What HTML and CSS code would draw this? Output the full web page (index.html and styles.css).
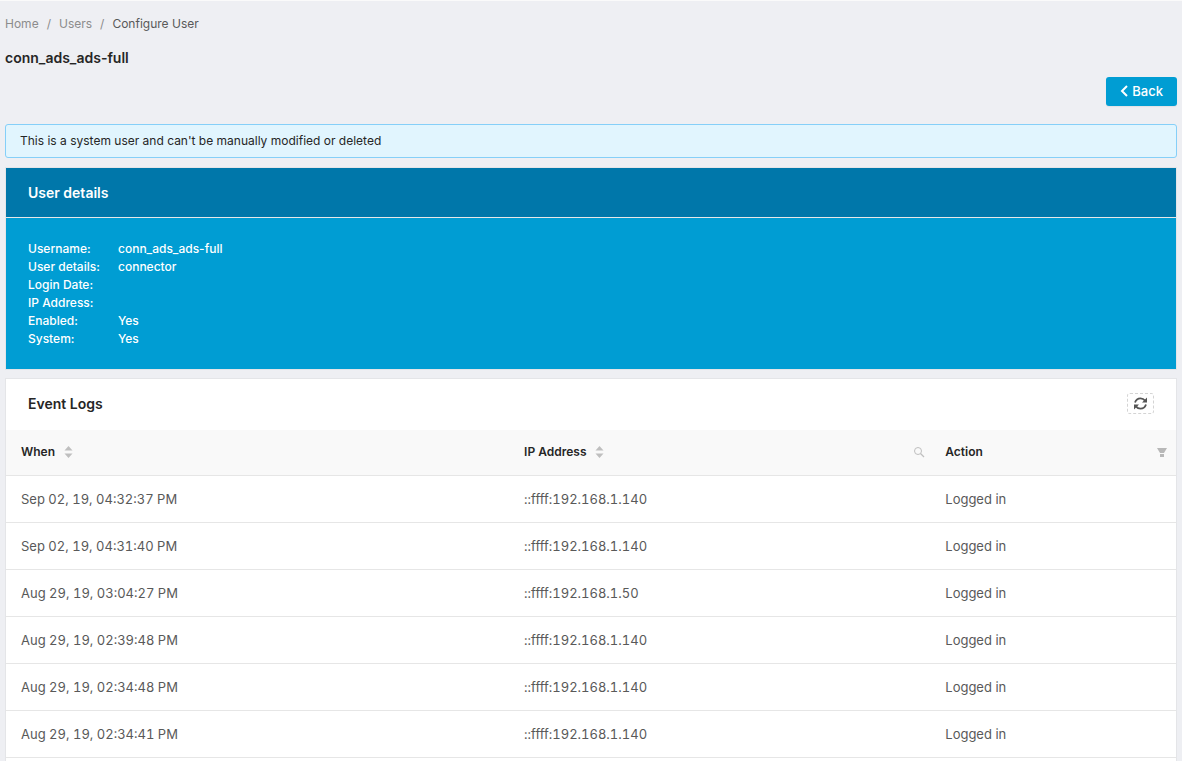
FILE: index.html
```html
<!DOCTYPE html>
<html lang="en">
<head>
<meta charset="utf-8">
<title>Configure User</title>
<link rel="stylesheet" href="styles.css">
</head>
<body>
<main class="page">
  <nav class="breadcrumb" aria-label="Breadcrumb">
    <a href="#">Home</a><span class="sep">/</span><a href="#">Users</a><span class="sep">/</span><span class="current">Configure User</span>
  </nav>
  <h1 class="title">conn_ads_ads-full</h1>
  <div class="actions">
    <button class="back" type="button"><svg width="8" height="12" viewBox="0 0 8 12" aria-hidden="true"><path d="M7 1 2 6l5 5" fill="none" stroke="#fff" stroke-width="2"/></svg>Back</button>
  </div>
  <div class="alert">This is a system user and can't be manually modified or deleted</div>
  <section class="card details">
    <h2 class="card-head">User details</h2>
    <dl class="info">
      <dt>Username:</dt><dd>conn_ads_ads-full</dd>
      <dt>User details:</dt><dd>connector</dd>
      <dt>Login Date:</dt><dd></dd>
      <dt>IP Address:</dt><dd></dd>
      <dt>Enabled:</dt><dd>Yes</dd>
      <dt>System:</dt><dd>Yes</dd>
    </dl>
  </section>
  <section class="card logs">
    <div class="logs-head">
      <h2>Event Logs</h2>
      <button class="refresh" type="button" aria-label="Refresh"><svg width="13" height="13" viewBox="0 0 13 13" aria-hidden="true"><g fill="none" stroke="#555" stroke-width="1.800"><path d="M1 5.500C1.800 3 3.900 1.300 6.500 1.300c1.900 0 3.400.8 4.600 2.300M12 7.500c-.8 2.500-2.900 4.200-5.500 4.200-1.900 0-3.400-.8-4.600-2.300"/></g><path fill="#555" d="M13 .5v5H8zM0 12.500v-5h5z"/></svg></button>
    </div>
    <table class="table">
      <colgroup><col class="c-when"><col class="c-ip"><col class="c-action"></colgroup>
      <thead>
        <tr>
          <th scope="col"><div class="th">When<svg class="sort" width="9" height="12" viewBox="0 0 9 12" aria-hidden="true"><path d="M4.500 0 8.500 4.500h-8zM4.500 12 .5 7.500h8z"/></svg></div></th>
          <th scope="col"><div class="th">IP Address<svg class="sort" width="9" height="12" viewBox="0 0 9 12" aria-hidden="true"><path d="M4.500 0 8.500 4.500h-8zM4.500 12 .5 7.500h8z"/></svg><svg class="tool" width="12" height="12" viewBox="0 0 12 12" aria-hidden="true"><circle cx="5" cy="5" r="3.500" fill="none" stroke="#bfbfbf"/><path d="m7.500 7.500 3.500 3.500" stroke="#bfbfbf" stroke-width="1.300"/></svg></div></th>
          <th scope="col"><div class="th">Action<svg class="tool filter" width="12" height="10" viewBox="0 0 12 10" aria-hidden="true"><path fill="#b8b8b8" d="M1 1h10L8 6H4zM4 7h4v3H4z"/></svg></div></th>
        </tr>
      </thead>
      <tbody>
        <tr><td>Sep 02, 19, 04:32:37 PM</td><td>::ffff:192.168.1.140</td><td>Logged in</td></tr>
        <tr><td>Sep 02, 19, 04:31:40 PM</td><td>::ffff:192.168.1.140</td><td>Logged in</td></tr>
        <tr><td>Aug 29, 19, 03:04:27 PM</td><td>::ffff:192.168.1.50</td><td>Logged in</td></tr>
        <tr><td>Aug 29, 19, 02:39:48 PM</td><td>::ffff:192.168.1.140</td><td>Logged in</td></tr>
        <tr><td>Aug 29, 19, 02:34:48 PM</td><td>::ffff:192.168.1.140</td><td>Logged in</td></tr>
        <tr><td>Aug 29, 19, 02:34:41 PM</td><td>::ffff:192.168.1.140</td><td>Logged in</td></tr>
      </tbody>
    </table>
  </section>
</main>
</body>
</html>
```
FILE: styles.css
```css
* { box-sizing: border-box; }
body {
  margin: 0;
  background: #eeeff3;
  color: #262626;
  font: 12px/18px Inter, "Liberation Sans", sans-serif;
}
h1, h2, dl, dd { margin: 0; }
button { font: inherit; cursor: pointer; }
.page {
  display: flex;
  flex-direction: column;
  min-height: 100vh;
  padding: 14px 5px 0;
  border-top: 1px solid #fafafa;
}
.breadcrumb { color: #8c8c8c; }
.breadcrumb a { color: inherit; text-decoration: none; }
.sep { margin: 0 8px; }
.current { color: #595959; }
.title {
  margin-top: 14px;
  font-size: 14px;
  line-height: 22px;
  font-weight: 600;
}
.actions { display: flex; justify-content: flex-end; margin-top: 8px; }
.back {
  display: flex;
  align-items: center;
  gap: 4px;
  padding: 5px 14px 6px;
  border: 0;
  border-radius: 3px;
  background: #009dd3;
  color: #fff;
  font-size: 13px;
  font-weight: 500;
  box-shadow: 0 1px 1px #e0e1e5;
}
.alert {
  margin-top: 18px;
  padding: 7px 14px;
  border: 1px solid #85cff8;
  border-radius: 3px;
  background: #e1f5fe;
}
.card { border: 1px solid #e4e5e8; }
.details {
  margin-top: 9px;
  background: #009dd3;
  color: #fff;
}
.card-head {
  padding: 14px 22px 13px;
  border-bottom: 1px solid #e8e8e8;
  background: #0077aa;
  font-size: 14px;
  line-height: 22px;
  font-weight: 600;
}
.info {
  display: grid;
  grid-template-columns: 90px 1fr;
  grid-auto-rows: 18px;
  padding: 22px 22px 21px;
  font-weight: 500;
}
.logs { flex: 1; margin-top: 8px; border-bottom: 0; background: #fff; }
.logs-head {
  display: flex;
  align-items: flex-start;
  justify-content: space-between;
  padding: 14px 22px 15px;
}
.logs-head h2 { font-size: 14px; line-height: 22px; font-weight: 600; }
.refresh {
  display: flex;
  align-items: center;
  justify-content: center;
  width: 27px;
  height: 21px;
  padding: 0;
  border: 1px dashed #d4d4d4;
  border-radius: 3px;
  background: #fff;
}
.table { width: 100%; table-layout: fixed; border-collapse: collapse; }
.c-when { width: 43%; }
.c-ip { width: 36%; }
.table th, .table td {
  padding: 14px 15px;
  border-bottom: 1px solid #e6e6e6;
  text-align: left;
}
.table th { padding-top: 13px; padding-right: 5px; background: #f9f9f9; font-weight: 600; }
.table td {
  color: #595959;
  font-size: 13px;
  font-variant-numeric: tabular-nums;
}
.th { display: flex; align-items: center; }
.sort { margin-left: 9px; fill: #bfbfbf; }
.tool { margin-left: auto; }
.filter { margin-right: 3px; }
```
